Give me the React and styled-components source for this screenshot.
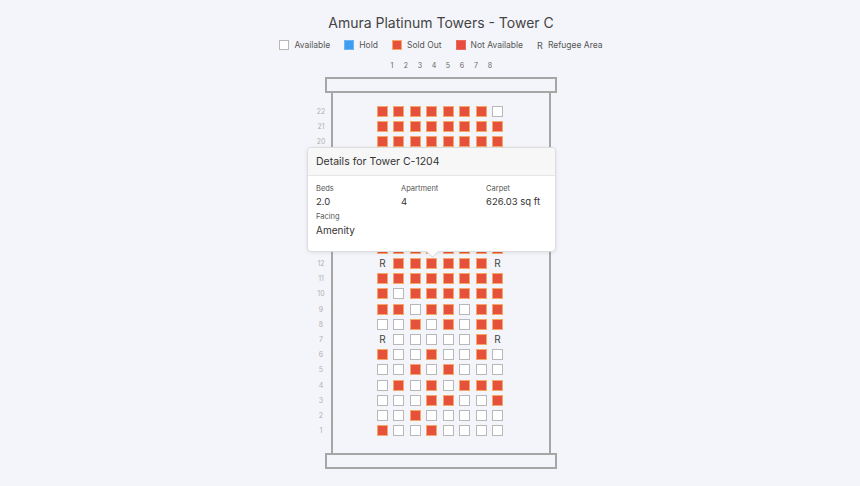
import React from "react";
import styled, { createGlobalStyle } from "styled-components";

const GlobalStyle = createGlobalStyle`
  html, body {
    margin: 0;
    padding: 0;
    background: #f4f5fa;
    font-family: "Inter", "Liberation Sans", sans-serif;
    color: #444;
  }
`;

// S = sold out, A = available, R = refugee area
const FLOORS = [
  [22, "SSSSSSSA"],
  [21, "SSSSSSSS"],
  [20, "SSSSSSSS"],
  [19, "SSSSSSSS"],
  [18, "SSSSSSSS"],
  [17, "SSSSSSSS"],
  [16, "SSSSSSSS"],
  [15, "SSSSSSSS"],
  [14, "SSSSSSSS"],
  [13, "SSSSSSSS"],
  [12, "RSSSSSSR"],
  [11, "SSSSSSSS"],
  [10, "SASSSSSS"],
  [9, "SSASSASS"],
  [8, "AASASASS"],
  [7, "RAAAAASR"],
  [6, "SAASAASA"],
  [5, "AASASAAA"],
  [4, "ASASASSS"],
  [3, "AAASSAAS"],
  [2, "AASAAAAA"],
  [1, "SAASAAAA"],
];

const STATUS = {
  A: { bg: "#ffffff", border: "#b8b8b8" },
  H: { bg: "#3d9df2", border: "#6cb4f4" },
  S: { bg: "#e6513b", border: "#f6a869" },
  N: { bg: "#e74c3c", border: "#ec6a5c" },
};

const App = () => {
  return (
    <>
      <GlobalStyle />
      <Page>
        <Title>Amura Platinum Towers - Tower C</Title>
        <Legend>
          <LegendItem>
            <Swatch status="A" />
            Available
          </LegendItem>
          <LegendItem>
            <Swatch status="H" />
            Hold
          </LegendItem>
          <LegendItem>
            <Swatch status="S" />
            Sold Out
          </LegendItem>
          <LegendItem>
            <Swatch status="N" />
            Not Available
          </LegendItem>
          <LegendItem>
            <RMark>R</RMark>
            Refugee Area
          </LegendItem>
        </Legend>

        <ColNumbers>
          {[1, 2, 3, 4, 5, 6, 7, 8].map((n) => (
            <ColNum key={n}>{n}</ColNum>
          ))}
        </ColNumbers>

        <Tower>
          <Roof />
          <Body>
            {FLOORS.map(([floor, units]) => (
              <FloorRow key={floor}>
                <FloorLabel>{floor}</FloorLabel>
                <Units>
                  {units.split("").map((u, i) =>
                    u === "R" ? (
                      <Refuge key={i}>R</Refuge>
                    ) : (
                      <Unit key={i} status={u} />
                    )
                  )}
                </Units>
              </FloorRow>
            ))}

            <Tooltip>
              <TipHeader>Details for Tower C-1204</TipHeader>
              <TipBody>
                <Field>
                  <FieldLabel>Beds</FieldLabel>
                  <FieldValue>2.0</FieldValue>
                </Field>
                <Field>
                  <FieldLabel>Apartment</FieldLabel>
                  <FieldValue>4</FieldValue>
                </Field>
                <Field>
                  <FieldLabel>Carpet</FieldLabel>
                  <FieldValue>626.03 sq ft</FieldValue>
                </Field>
                <Field>
                  <FieldLabel>Facing</FieldLabel>
                  <FieldValue big>Amenity</FieldValue>
                </Field>
              </TipBody>
            </Tooltip>
          </Body>
          <Roof />
        </Tower>
      </Page>
    </>
  );
};

export default App;

const Page = styled.div`
  width: 860px;
  height: 486px;
  box-sizing: border-box;
  padding: 13px 0 0 22px;
  display: flex;
  flex-direction: column;
  align-items: center;
`;

const Title = styled.h1`
  margin: 0;
  font-size: 14px;
  line-height: 20px;
  font-weight: 400;
  color: #444;
`;

const Legend = styled.div`
  display: flex;
  align-items: center;
  gap: 14px;
  margin-top: 6px;
  height: 12px;
  font-size: 8.5px;
  color: #555;
`;

const LegendItem = styled.div`
  display: flex;
  align-items: center;
  gap: 5px;
`;

const Swatch = styled.span`
  width: 10px;
  height: 10px;
  box-sizing: border-box;
  background: ${(p) => STATUS[p.status].bg};
  border: 1px solid ${(p) => STATUS[p.status].border};
`;

const RMark = styled.span`
  font-size: 9px;
  color: #555;
`;

const ColNumbers = styled.div`
  display: flex;
  margin-top: 10px;
  height: 10px;
`;

const ColNum = styled.span`
  width: 14px;
  text-align: center;
  font-size: 7px;
  line-height: 10px;
  color: #666;
`;

const Tower = styled.div`
  width: 232px;
  margin-top: 6px;
  display: flex;
  flex-direction: column;
`;

const Roof = styled.div`
  height: 16px;
  box-sizing: border-box;
  border: 2px solid #a6a6a6;
`;

const Body = styled.div`
  position: relative;
  margin: 0 6px;
  height: 360px;
  box-sizing: border-box;
  padding: 10.4px 0 0;
  border-left: 2px solid #a6a6a6;
  border-right: 2px solid #a6a6a6;
`;

const FloorRow = styled.div`
  display: flex;
  align-items: center;
  height: 15.24px;
`;

const FloorLabel = styled.span`
  width: 20px;
  margin-left: -22px;
  text-align: center;
  font-size: 7px;
  color: #b0b0b0;
`;

const Units = styled.div`
  display: flex;
  gap: 5.43px;
  margin-left: 46px;
`;

const Unit = styled.span`
  width: 11px;
  height: 11px;
  box-sizing: border-box;
  background: ${(p) => STATUS[p.status].bg};
  border: 1px solid ${(p) => STATUS[p.status].border};
`;

const Refuge = styled.span`
  width: 11px;
  height: 11px;
  display: flex;
  align-items: flex-end;
  justify-content: center;
  font-size: 10px;
  line-height: 12px;
  color: #444;
`;

const Tooltip = styled.div`
  position: absolute;
  left: -26px;
  top: 54px;
  width: 249px;
  height: 105px;
  box-sizing: border-box;
  background: #fff;
  border: 1px solid #dcdcdc;
  border-radius: 4px;
  box-shadow: 0 1px 4px rgba(0, 0, 0, 0.08);

  &::after {
    content: "";
    position: absolute;
    left: 120px;
    bottom: -5px;
    width: 8px;
    height: 8px;
    background: #fff;
    border-right: 1px solid #dcdcdc;
    border-bottom: 1px solid #dcdcdc;
    transform: rotate(45deg);
  }
`;

const TipHeader = styled.div`
  height: 28px;
  box-sizing: border-box;
  padding: 0 8px;
  display: flex;
  align-items: center;
  background: #f7f7f7;
  border-bottom: 1px solid #e6e6e6;
  border-radius: 4px 4px 0 0;
  font-size: 10.5px;
  color: #333;
`;

const TipBody = styled.div`
  display: grid;
  grid-template-columns: 85px 85px 1fr;
  row-gap: 1px;
  padding: 6px 8px 0;
`;

const Field = styled.div`
  display: flex;
  flex-direction: column;
`;

const FieldLabel = styled.span`
  font-size: 7.5px;
  line-height: 13px;
  color: #555;
`;

const FieldValue = styled.span`
  font-size: ${(p) => (p.big ? "10px" : "9.5px")};
  line-height: 14px;
  color: #333;
`;
